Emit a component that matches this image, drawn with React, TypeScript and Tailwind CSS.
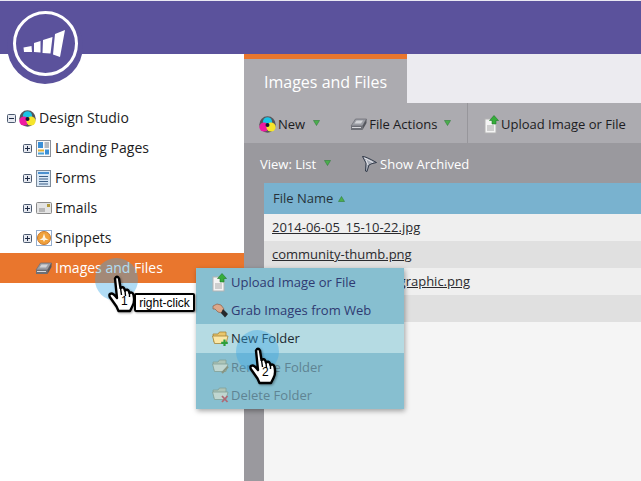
import React from "react";

const Arrow = ({ up = false }: { up?: boolean }) => (
  <svg width="7" height="6" viewBox="0 0 7 6" className="shrink-0">
    <path d={up ? "M3.5 0.5 L6.5 5.5 H0.5 Z" : "M0.5 0.5 H6.5 L3.5 5.5 Z"} fill="#4cae4c" stroke="#2f7d3a" strokeWidth="0.6" />
  </svg>
);

const Expander = ({ open = false }: { open?: boolean }) => (
  <svg width="9" height="9" viewBox="0 0 9 9" className="shrink-0">
    <rect x="0.5" y="0.5" width="8" height="8" rx="1" fill="#e6e9f0" stroke="#4c5a70" />
    <path d={open ? "M2 4.5 H7" : "M2 4.5 H7 M4.5 2 V7"} stroke="#1d2a44" strokeWidth="1" />
  </svg>
);

const StudioIcon = () => (
  <svg width="17" height="17" viewBox="0 0 17 17" className="shrink-0">
    <circle cx="8.5" cy="8.5" r="8.2" fill="#55555a" />
    <circle cx="8.5" cy="5.8" r="4.6" fill="#19c4e6" />
    <circle cx="5" cy="11" r="4.6" fill="#ee1aa0" />
    <circle cx="12" cy="11" r="4.6" fill="#f6e52c" />
    <circle cx="8.5" cy="9" r="2" fill="#181830" />
  </svg>
);

const DiskIcon = () => (
  <svg width="17" height="13" viewBox="0 0 17 13" className="shrink-0">
    <path d="M5.5 1 H16.5 L12.5 8 H1 Z" fill="#9a9ca3" stroke="#6a6c73" strokeWidth="0.7" />
    <path d="M6.5 2.5 H13 L11 5.5 H4.5 Z" fill="#d2d3d7" />
    <path d="M1 8 H12.5 V12 H1 Z" fill="#6d6f76" />
    <path d="M12.5 8 L16.5 1 V5 L12.5 12 Z" fill="#55575e" />
    <path d="M2 9.5 H11" stroke="#d8d8dc" />
  </svg>
);

const PageIcon = () => (
  <svg width="15" height="19" viewBox="0 0 15 19" className="shrink-0">
    <rect x="1" y="4" width="11" height="14" fill="#f4f4f4" stroke="#b4b4b4" />
    <path d="M3 11 H10 M3 13 H10 M3 15 H10" stroke="#a8a8a8" />
    <path d="M10 0.5 L14.5 5.5 H12 V9 H8 V5.5 H5.5 Z" fill="#36ad3a" stroke="#1f7a28" strokeWidth="0.6" />
  </svg>
);

const LandingIcon = () => (
  <svg width="15" height="17" viewBox="0 0 15 17" className="shrink-0">
    <rect x="0.5" y="0.5" width="14" height="16" fill="#fafafa" stroke="#8a9099" />
    <rect x="2" y="2" width="5" height="6" fill="#3b8fd6" />
    <path d="M8.5 3 H13 M8.5 5 H13 M8.5 7 H13" stroke="#6f7a88" />
    <rect x="2" y="9.5" width="6" height="2" fill="#e2b23a" />
    <rect x="2" y="12.5" width="6" height="2" fill="#49a2d8" />
    <rect x="9" y="9.5" width="4" height="5" fill="#3b8fd6" />
  </svg>
);

const FormsIcon = () => (
  <svg width="15" height="17" viewBox="0 0 15 17" className="shrink-0">
    <rect x="0.5" y="0.5" width="14" height="16" fill="#d9e8f6" stroke="#7d8a99" />
    <rect x="2" y="2" width="11" height="2" fill="#4a90cf" />
    <path d="M3 6.5 H12 M3 9 H12 M3 11.5 H12 M3 14 H12" stroke="#3c5f86" />
  </svg>
);

const EmailIcon = () => (
  <svg width="16" height="12" viewBox="0 0 16 12" className="shrink-0">
    <rect x="0.5" y="0.5" width="15" height="11" rx="1" fill="#e4e4e4" stroke="#8b8b8b" />
    <rect x="11" y="2" width="3" height="3" fill="#b39a3c" />
    <path d="M3 7 H9 M3 9 H9" stroke="#8a8a8a" />
  </svg>
);

const SnippetIcon = () => (
  <svg width="16" height="16" viewBox="0 0 16 16" className="shrink-0">
    <rect x="0.5" y="0.5" width="15" height="15" fill="none" stroke="#2a5d9c" strokeDasharray="1 1" />
    <circle cx="8" cy="8" r="6.5" fill="#f0a13c" stroke="#c8772a" />
    <path d="M8 3.5 L9.5 8 L12.5 10 H9 L8 12 L7 10 H3.5 L6.5 8 Z" fill="#fdf3e2" />
  </svg>
);

const GrabIcon = () => (
  <svg width="17" height="15" viewBox="0 0 17 15" className="shrink-0">
    <path d="M1 3 L5 1 L9 2 L12 6 L10 10 L6 9 L3 6 L1 6 Z" fill="#dca88a" stroke="#8e5f48" strokeWidth="0.7" />
    <path d="M11 6 L16 11 L13 14.5 L9 10 Z" fill="#26282c" />
  </svg>
);

const FolderIcon = ({ dim = false, badge }: { dim?: boolean; badge: "add" | "edit" | "del" }) => (
  <svg width="18" height="16" viewBox="0 0 18 16" className="shrink-0" opacity={dim ? 0.6 : 1}>
    <path d="M1 3 H6 L7.5 1 H14 V11 H2 Z" fill={dim ? "#c9c9a8" : "#e9c66c"} stroke={dim ? "#7d8a70" : "#a58437"} strokeWidth="0.8" />
    <path d="M0.5 5 H16 L14 12.5 H2.5 Z" fill={dim ? "#e6e6d0" : "#fbe7a6"} stroke={dim ? "#7d8a70" : "#a58437"} strokeWidth="0.8" />
    {badge === "add" && <path d="M12.5 8.5 V15 M9.2 11.8 H15.8" stroke="#2e9e3a" strokeWidth="2.2" />}
    {badge === "edit" && <path d="M10 14 L16 7.5" stroke="#8a7a50" strokeWidth="2" />}
    {badge === "del" && <path d="M10 9 L15.5 15 M15.5 9 L10 15" stroke="#c9323c" strokeWidth="1.8" />}
  </svg>
);

const FunnelIcon = () => (
  <svg width="15" height="16" viewBox="0 0 15 16" className="shrink-0">
    <path d="M0.5 0.5 Q3 0 14.5 6.5 Q9 7.5 7 9 L5 15.5 L3.5 15 L4 7 Z" fill="#a9aeb9" stroke="#27303f" strokeWidth="0.9" />
    <path d="M2.5 2 L11 6.5 M4 4 L6 9" stroke="#eeeef2" strokeWidth="0.9" />
  </svg>
);

const Hand = () => (
  <svg width="28" height="38" viewBox="0 0 28 38" style={{ filter: "drop-shadow(1px 1px 1px rgba(0,0,0,.35))" }}>
    <path
      d="M7 3.5 Q9 0 11 3.5 L12.5 13 Q15 11 16.5 14 L17 15.5 Q19.5 13.5 21 16.5 L21.5 18 Q24.5 16.5 25.5 20 Q27 27 24.5 31 L22 36 H10.5 L8.5 31.5 L1.8 22 Q0.5 18.5 3.5 18.5 Q5.5 18.5 9 23 Z"
      fill="#fff"
      stroke="#000"
      strokeWidth="2.4"
      strokeLinejoin="round"
    />
    <path d="M12.5 13 L13.5 20 M17 15.5 L17.5 21 M21.5 18 L21.5 22" stroke="#000" strokeWidth="1.4" />
  </svg>
);

const treeItems = [
  { label: "Landing Pages", icon: <LandingIcon /> },
  { label: "Forms", icon: <FormsIcon /> },
  { label: "Emails", icon: <EmailIcon /> },
  { label: "Snippets", icon: <SnippetIcon /> },
];

const files = ["2014-06-05_15-10-22.jpg", "community-thumb.png", "email-marketing-infographic.png", ""];

const menuItems = [
  { label: "Upload Image or File", icon: <PageIcon />, cls: "h-7 text-[#2f3a72]" },
  { label: "Grab Images from Web", icon: <GrabIcon />, cls: "h-7 text-[#2f3a72]" },
  { label: "New Folder", icon: <FolderIcon badge="add" />, cls: "h-[29px] bg-[#b5dbe3] text-[#1c2a30]" },
  { label: "Rename Folder", icon: <FolderIcon dim badge="edit" />, cls: "h-7 text-[#5f8493]" },
  { label: "Delete Folder", icon: <FolderIcon dim badge="del" />, cls: "h-7 text-[#5f8493]" },
];

export default function App() {
  return (
    <div className="relative flex h-[481px] w-[641px] flex-col overflow-hidden bg-white font-['Open_Sans',sans-serif] text-sm text-[#1c1c22]">
      <div className="h-[54px] shrink-0 border-t border-[#e9e8f2] bg-[#5b529c]" />

      <div className="flex min-h-0 flex-1">
        <div className="w-[244px] shrink-0 pt-[49px]">
          <div className="flex h-[30px] items-center pl-[7px]">
            <Expander open />
            <span className="ml-[3px] flex w-[20px]"><StudioIcon /></span>
            <span>Design Studio</span>
          </div>
          {treeItems.map((item) => (
            <div key={item.label} className="flex h-[30px] items-center pl-[23px]">
              <Expander />
              <span className="ml-1 flex w-[19px] items-center">{item.icon}</span>
              <span>{item.label}</span>
            </div>
          ))}
          <div className="flex h-[30px] items-center bg-[#e9762d] pl-[35px] text-white">
            <span className="flex w-5 items-center"><DiskIcon /></span>
            <span>Images and Files</span>
          </div>
        </div>

        <div className="flex min-w-0 flex-1 flex-col">
          <div className="flex h-[49px] shrink-0 bg-[#ecebf0]">
            <div className="flex w-[163px] items-center border-t-[5px] border-[#e9762d] bg-[#acabb0] pl-5 pt-[2px] text-base text-white">
              Images and Files
            </div>
          </div>

          <div className="flex h-10 shrink-0 bg-[#acabb0] text-[13px]">
            <div className="flex h-full w-[224px] items-center border-r border-[#97969b] pl-[15px] pt-[2px]">
              <StudioIcon />
              <span className="ml-[2px]">New</span>
              <span className="mb-[3px] ml-2"><Arrow /></span>
              <span className="ml-[30px]"><DiskIcon /></span>
              <span className="ml-[2px]">File Actions</span>
              <span className="mb-[3px] ml-[7px]"><Arrow /></span>
            </div>
            <div className="flex items-center pl-4 pt-[2px]">
              <PageIcon />
              <span className="ml-[2px]">Upload Image or File</span>
            </div>
          </div>

          <div className="flex h-10 shrink-0 items-center bg-[#9a999e] pl-4 pt-[2px] text-[13px] text-white">
            <span>View: List</span>
            <span className="mb-[2px] ml-2"><Arrow /></span>
            <span className="ml-[31px]"><FunnelIcon /></span>
            <span className="ml-[3px]">Show Archived</span>
          </div>

          <div className="flex min-h-0 flex-1 bg-[#9a999e] pl-5">
            <div className="flex-1 bg-[#f5f5f5] text-[13px] text-[#2a2a2e]">
              <div className="flex h-[31px] items-center gap-[5px] bg-[#79b2cf] pl-[9px] text-[#26323a]">
                File Name <Arrow up />
              </div>
              {files.map((name, i) => (
                <div key={i} className={`flex h-[27px] items-center pl-2 ${i % 2 ? "bg-[#e0e0e0]" : "bg-[#efefef]"}`}>
                  <span className="underline">{name}</span>
                </div>
              ))}
            </div>
          </div>
        </div>
      </div>

      {/* logo hangs over the header and the sidebar */}
      <div className="absolute left-[7px] top-[8px] h-[76px] w-[76px] rounded-full bg-[#5b529c]">
        <svg width="66" height="66" viewBox="12 10 66 66" className="absolute left-[5px] top-[2px]">
          <circle cx="45.5" cy="43.5" r="31" fill="none" stroke="#fff" strokeWidth="3" />
          <path d="M23.5 47.5 L31.5 46 L32 52 L24 52 Z M34 43 L40.5 41 L40.5 52.5 L34 52 Z M43 40 L52.5 37 L50.5 53.5 L42.5 53 Z M55 34 L65 30 L60 57 L53 54.5 Z" fill="#fff" />
        </svg>
      </div>

      {/* context menu */}
      <div className="absolute left-[196px] top-[268px] w-[208px] bg-[#87bfd0] text-[13px] shadow-[1px_2px_5px_rgba(0,0,0,0.35)]">
        {menuItems.map((item) => (
          <div key={item.label} className={`flex items-center pl-[16px] ${item.cls}`}>
            <span className="flex w-[19px] items-center">{item.icon}</span>
            <span>{item.label}</span>
          </div>
        ))}
      </div>

      {/* click markers */}
      <div className="absolute left-[95px] top-[258px] h-[43px] w-[43px] rounded-full bg-[rgba(58,167,230,0.4)]" />
      <div className="absolute left-[236px] top-[330px] h-[43px] w-[43px] rounded-full bg-[rgba(58,167,230,0.4)]" />

      <div className="absolute left-[108px] top-[275px]"><Hand /></div>
      <span className="absolute left-[121px] top-[293px] font-['Liberation_Sans',sans-serif] text-xs text-black">1</span>
      <div className="absolute left-[134px] top-[293px] flex h-[19px] w-[61px] items-center justify-center rounded-[2px] border-2 border-black bg-white font-['Liberation_Sans',sans-serif] text-xs text-black shadow-[1px_1px_2px_rgba(0,0,0,0.4)]">
        right-click
      </div>

      <div className="absolute left-[249px] top-[347px]"><Hand /></div>
      <span className="absolute left-[262px] top-[364px] font-['Liberation_Sans',sans-serif] text-xs text-black">2</span>
    </div>
  );
}
